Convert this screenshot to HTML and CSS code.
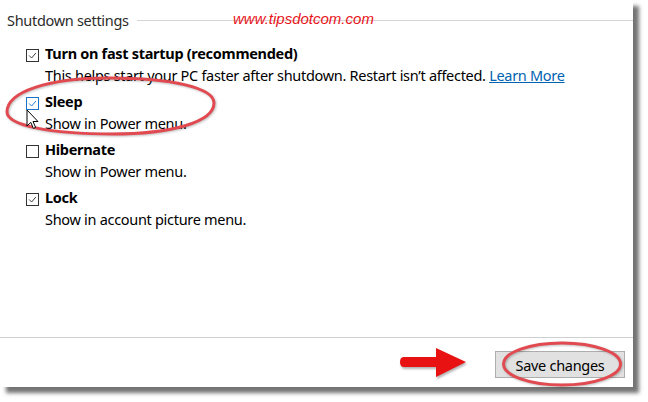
FILE: index.html
```html
<!DOCTYPE html>
<html lang="en">
<head>
  <meta charset="UTF-8">
  <title>Shutdown settings</title>
  <link rel="stylesheet" href="styles.css">
</head>
<body>

  <!-- Settings window -->
  <div class="window">
    <div class="content">
      <div class="group-title">
        <span>Shutdown settings</span>
        <span class="rule"></span>
      </div>

      <ul class="options">
        <li class="option">
          <div class="label">
            <span class="box"><svg viewBox="0 0 13 13"><path d="M2.5 6.5 L5.5 9.5 L10.5 3.5"/></svg></span>
            Turn on fast startup (recommended)
          </div>
          <div class="desc">This helps start your PC faster after shutdown. Restart isn’t affected. <a href="#">Learn More</a></div>
        </li>
        <li class="option">
          <div class="label">
            <span class="box focus"><svg viewBox="0 0 13 13"><path d="M2.5 6.5 L5.5 9.5 L10.5 3.5"/></svg></span>
            Sleep
          </div>
          <div class="desc">Show in Power menu.</div>
        </li>
        <li class="option">
          <div class="label">
            <span class="box"></span>
            Hibernate
          </div>
          <div class="desc">Show in Power menu.</div>
        </li>
        <li class="option">
          <div class="label">
            <span class="box"><svg viewBox="0 0 13 13"><path d="M2.5 6.5 L5.5 9.5 L10.5 3.5"/></svg></span>
            Lock
          </div>
          <div class="desc">Show in account picture menu.</div>
        </li>
      </ul>
    </div>

    <div class="footer">
      <button class="save">Save changes</button>
    </div>
  </div>

  <!-- Annotations drawn over the screenshot -->
  <div class="watermark">www.tipsdotcom.com</div>

  <svg class="mark mark-sleep" width="224" height="72" viewBox="0 0 224 72">
    <path d="M7 42 C7 21.6 48 8 110 8 C172 8 214 18 214 33 C214 51.6 173 64 112 64 C49 64 7 55 7 42 Z"/>
  </svg>

  <svg class="cursor" width="14" height="21" viewBox="0 0 14 21">
    <path d="M1 1 L1 17 L4.8 13.4 L7.4 19.4 L9.6 18.4 L7 12.5 L12 12.5 Z"/>
  </svg>

  <svg class="mark mark-save" width="128" height="50" viewBox="0 0 128 50">
    <ellipse cx="64" cy="24" rx="58.5" ry="21"/>
  </svg>

  <svg class="arrow" width="72" height="36" viewBox="0 0 72 36">
    <path d="M5 11 L37 11 L37 2 L67 16 L37 31 L37 21 L5 21 Q1 21 1 16 Q1 11 5 11 Z"/>
  </svg>

</body>
</html>
```

FILE: styles.css
```css
* { box-sizing: border-box; }

body {
  font-family: "Noto Sans", Arial, sans-serif;
  font-size: 14.5px;
  letter-spacing: -0.3px;
  color: #000;
  background: #fff;
  margin: 0;
  padding: 0;
  position: relative;
  width: 648px;
  height: 402px;
  overflow: hidden;
}

/* Window */
.window {
  width: 633px;
  height: 387px;
  background: #fff;
  display: flex;
  flex-direction: column;
  box-shadow: 6px 6px 4px rgba(0,0,0,0.55);
}

.content {
  flex: 1;
  padding: 9px 0 0 7px;
}

.group-title {
  display: flex;
  align-items: center;
  gap: 8px;
  line-height: 22px;
  color: #2b2b2b;
  margin-bottom: 11px;
}

.group-title .rule {
  flex: 1;
  height: 1px;
  background: #d4d4d4;
}

.options {
  list-style: none;
  margin: 0;
  padding: 0 0 0 19px;
}

.option { margin-bottom: 4px; }

.label {
  display: flex;
  align-items: flex-start;
  font-weight: 700;
  line-height: 22px;
}

.box {
  width: 13px;
  height: 13px;
  margin: 7px 6px 0 0;
  border: 1px solid #333;
  background: #fff;
  flex-shrink: 0;
}

.box svg {
  display: block;
  width: 11px;
  height: 11px;
  fill: none;
  stroke: #333;
  stroke-width: 1.1;
}

.box.focus { border-color: #1a73c8; }
.box.focus svg { stroke: #1a73c8; }

.desc {
  padding-left: 19px;
  line-height: 22px;
}

.desc a {
  color: #0063b1;
  text-decoration: underline;
}

/* Footer */
.footer {
  height: 50px;
  border-top: 1px solid #cfcfcf;
  display: flex;
  justify-content: flex-end;
  align-items: flex-start;
  padding: 13px 8px 0 0;
}

.save {
  width: 130px;
  height: 27px;
  font-family: inherit;
  font-size: 14.5px;
  letter-spacing: -0.3px;
  color: #000;
  background: #e1e1e1;
  border: 1px solid #adadad;
  padding: 0;
}

/* Annotations */
.watermark {
  position: absolute;
  left: 233px;
  top: 10px;
  font-family: "Liberation Sans", Arial, sans-serif;
  font-style: italic;
  font-size: 15px;
  letter-spacing: 0;
  color: #e8141c;
}

.mark {
  position: absolute;
  fill: none;
  stroke: #e04a50;
  stroke-width: 3;
  filter: drop-shadow(1px 1px 1px rgba(0,0,0,0.25));
}

.mark-sleep { left: 0; top: 70px; }
.mark-save { left: 498px; top: 340px; }

.cursor {
  position: absolute;
  left: 26px;
  top: 109px;
  fill: #fff;
  stroke: #000;
  stroke-width: 1;
}

.arrow {
  position: absolute;
  left: 399px;
  top: 346px;
  fill: #e81212;
  filter: drop-shadow(1px 2px 1px rgba(0,0,0,0.3));
}
```
